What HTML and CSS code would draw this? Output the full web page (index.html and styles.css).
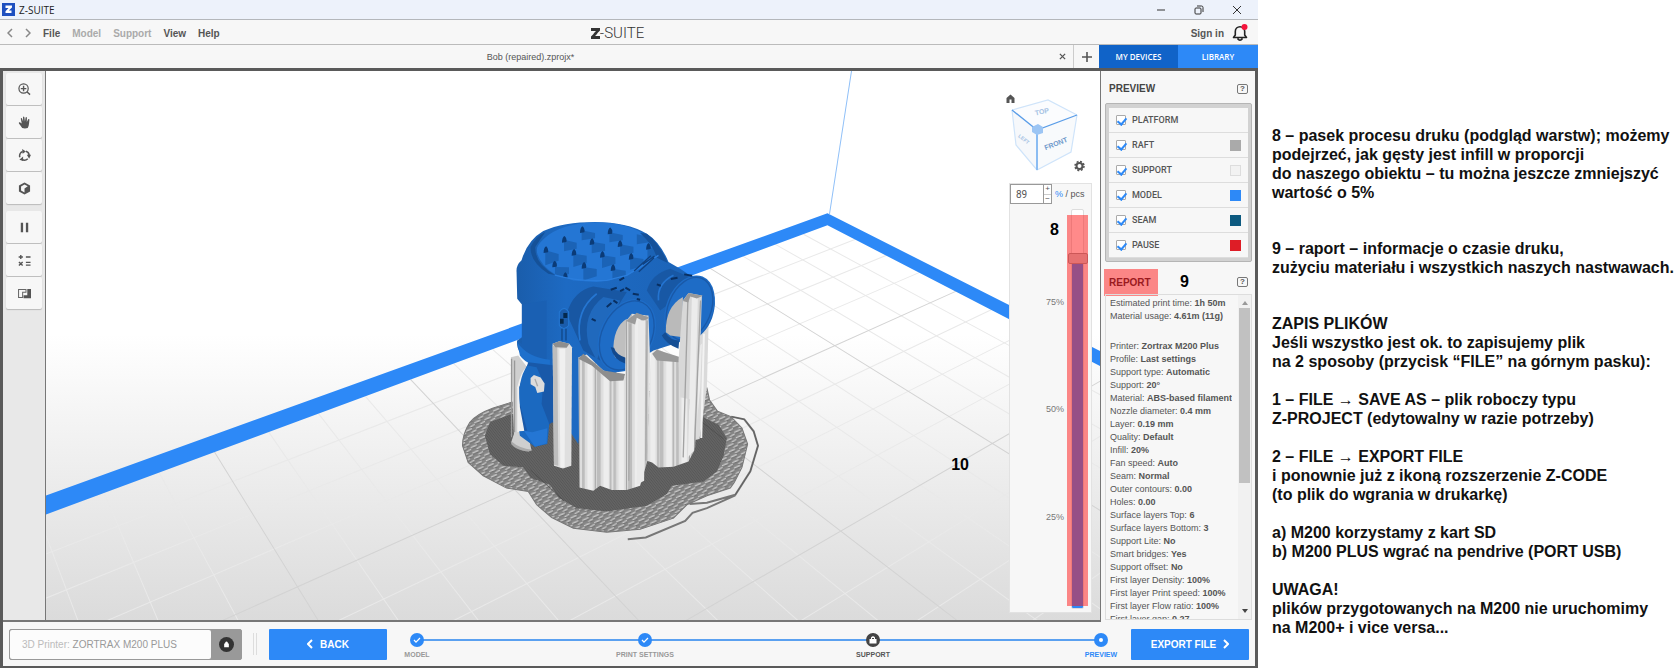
FILE: index.html
```
<!DOCTYPE html>
<html lang="pl">
<head>
<meta charset="utf-8">
<meta name="viewport" content="initial-scale=1.0, width=device-width">
<title>Z-SUITE</title>
<link rel="stylesheet" href="styles.css">
</head>
<body>

<div class="page">
<div class="app">

  <header class="titlebar">
    <svg class="appicon" viewBox="0 0 13 13"><rect width="13" height="13" fill="#1d4fc0"/><path d="M3.500 2.500h6.500v2L6.800 7.500H9.500v2.500H3.500V8.200L6.500 5h-3z" fill="#fff"/></svg>
    <span class="apptitle">Z-SUITE</span>
    <div class="winbtns">
      <button type="button" aria-label="Minimize"><svg viewBox="0 0 10 10"><path d="M1 5h8"/></svg></button>
      <button type="button" aria-label="Restore"><svg viewBox="0 0 10 10"><rect x="1" y="3" width="6" height="6" rx="1"/><path d="M3 1h4.500q1.500 0 1.500 1.500V7"/></svg></button>
      <button type="button" aria-label="Close"><svg viewBox="0 0 10 10"><path d="M1 1l8 8M9 1l-8 8"/></svg></button>
    </div>
  </header>

  <nav class="menubar">
    <div class="menus">
      <button type="button" class="arrow" aria-label="Undo"><svg viewBox="0 0 6 10"><path d="M5 1L1 5l4 4"/></svg></button>
      <button type="button" class="arrow" aria-label="Redo"><svg viewBox="0 0 6 10"><path d="M1 1l4 4-4 4"/></svg></button>
      <button type="button">File</button>
      <button type="button" disabled>Model</button>
      <button type="button" disabled>Support</button>
      <button type="button">View</button>
      <button type="button">Help</button>
    </div>
    <div class="logo">
      <svg viewBox="0 0 9 11"><path d="M0 0h9v2.500L6 5.500H2.500L5 3H0zM9 11H0V8.500L3 5.500h3.500L4 8h5z" fill="#333"/></svg><span>-SUITE</span>
    </div>
    <div class="account">
      <button type="button">Sign in</button>
      <button type="button" aria-label="Notifications"><svg class="bell" viewBox="0 0 16 18"><path d="M1.500 13.500h13L12.700 11V7.500a4.700 4.700 0 0 0-9.400 0V11zM5.500 14.500q2.500 3.500 5 0" fill="none" stroke="#222" stroke-width="1.600" stroke-linejoin="round"/><circle cx="12.500" cy="3" r="3" fill="#f5143c"/></svg></button>
    </div>
  </nav>

  <div class="tabs">
    <div class="filetab"><span>Bob (repaired).zprojx*</span></div>
    <button type="button" class="tabclose" aria-label="Close tab"><svg viewBox="0 0 8 8"><path d="M1 1l6 6M7 1L1 7"/></svg></button>
    <button type="button" class="tabadd" aria-label="New tab"><svg viewBox="0 0 10 10"><path d="M5 0v10M0 5h10"/></svg></button>
    <button type="button" class="sidetab active">MY DEVICES</button>
    <button type="button" class="sidetab">LIBRARY</button>
  </div>

  <main class="work">
    <div class="toolbar">
      <button type="button" aria-label="Zoom"><svg viewBox="0 0 14 14"><circle cx="6" cy="6" r="5" fill="none" stroke="#555" stroke-width="1.300"/><path d="M6 3v6M3 6h6M9.500 9.500l3.500 3" fill="none" stroke="#555" stroke-width="1.500"/></svg></button>
      <button type="button" aria-label="Pan"><svg viewBox="0 0 14 14"><path d="M4.500 13Q3 10.500 1 8q-.5-1.500 1-1.300L4 8 3 3q.3-1.200 1.200-.5L5.500 6 5.400 1.200q.7-1.200 1.400 0L7.500 6l.7-4.500q.8-1 1.400.2L9.500 6.500 11 3.500q1-.8 1.300.3Q12 8 11.500 10.500L10.500 13q-3 1-6 0z" fill="#555"/></svg></button>
      <button type="button" aria-label="Rotate"><svg viewBox="0 0 14 14"><path d="M2 9A5 5 0 0 1 5 2.800M8.500 2.500A5 5 0 0 1 12 6.500M10.500 10.500A5 5 0 0 1 4 11" fill="none" stroke="#555" stroke-width="1.700"/><path d="M4.500 0l4 2.600-3.500 2.600zM9.500 6.200h4.500L12 10.500zM5.500 8.200V13L1.500 11.500z" fill="#555"/></svg></button>
      <button type="button" aria-label="View mode"><svg viewBox="0 0 14 14"><path d="M7 .5l6 3.400v6.300l-6 3.300-6-3.300V3.900z" fill="#555"/><path d="M7 2.700l3.500 2L7 6.900v4.300l-3.700-2V4.800z" fill="#f7f7f7"/></svg></button>
      <i class="sep"></i>
      <button type="button" aria-label="Pause"><svg viewBox="0 0 14 14"><path d="M3 2h2.500v10H3zM8.500 2H11v10H8.500z" fill="#555"/></svg></button>
      <button type="button" aria-label="Calculate"><svg viewBox="0 0 14 14"><path d="M3 1v4.500M.7 3.200h4.600M8.500 3.200h5M1 8.500l4 4M5 8.500l-4 4M8.500 9h5M8.500 12h5" fill="none" stroke="#555" stroke-width="1.500"/></svg></button>
      <button type="button" aria-label="Section"><svg viewBox="0 0 14 10"><path d="M.6 9.400V.6h8v3H5v5.800z" fill="none" stroke="#666" stroke-width="1.100"/><path d="M6 10V7h4V.2h4V10z" fill="#555"/></svg></button>
    </div>

    <div class="viewport">
      <svg class="scene" viewBox="46 71 1054 548" preserveAspectRatio="xMidYMid slice">
        <defs>
          <linearGradient id="floor" x1="0" y1="0" x2="0" y2="1">
            <stop offset="0" stop-color="#fff"/><stop offset=".48" stop-color="#fff"/>
            <stop offset=".75" stop-color="#ececec"/><stop offset="1" stop-color="#dbdbdb"/>
          </linearGradient>
          <linearGradient id="body" x1="0" y1="0" x2="1" y2="0">
            <stop offset="0" stop-color="#1a5dab"/><stop offset=".25" stop-color="#1d6ac3"/><stop offset="1" stop-color="#1c63b6"/>
          </linearGradient>
          <pattern id="mesh" width="32" height="17" patternUnits="userSpaceOnUse" patternTransform="rotate(-17)">
            <rect width="32" height="17" fill="#868686"/>
            <path d="M0 5l20-3M16 13l16-3" stroke="#c9c9c9" stroke-width="4"/>
            <path d="M0 9l22-3M14 17l18-3" stroke="#646464" stroke-width="2"/>
          </pattern>
          <pattern id="raft" width="6" height="6" patternUnits="userSpaceOnUse" patternTransform="rotate(-38)">
            <rect width="6" height="6" fill="#636363"/><path d="M1 0v6" stroke="#575757" stroke-width="2"/>
          </pattern>
          <pattern id="cols" width="94" height="10" patternUnits="userSpaceOnUse">
            <rect width="94" height="10" fill="#dedede"/>
            <path d="M0 0h12v10H0zM50 0h8v10h-8z" fill="#bdbdbd"/>
            <path d="M20 0h17v10H20zM66 0h16v10H66z" fill="#ededed"/>
            <path d="M40 0h3v10h-3zM88 0h3v10h-3z" fill="#9d9d9d"/>
          </pattern>
          <clipPath id="opening"><path d="M290 150Q290 135 312 115 360 70 465 66 570 66 625 112L655 160 600 205 540 235 470 245 400 240 345 222Q295 190 290 150z"/></clipPath>
        </defs>

        <rect x="46" y="71" width="1054" height="548" fill="url(#floor)"/>

        <!-- build plate grid -->
        <path class="minor" d="M803 234L1517 620M775 244L1437 620M743 256L1357 620M677 281L1197 620M642 293L1117 620M606 307L1037 620M530 335L878 620M493 349L798 620M454 363L718 620M366 396L559 620M319 413L479 620M269 431L399 620M160 472L239 620M105 492L159 620M40 516L79 620"/>
        <path class="minor" d="M855 239L-125 620M886 255L-9 620M919 272L107 620M991 309L338 620M1030 329L453 620M1071 350L569 620M1162 397L800 620M1215 424L916 620M1270 452L1031 620"/>
        <path class="major" d="M710 268L1277 620M568 321L957 620M411 379L639 620M215 451L319 620M955 291L222 620M1114 372L685 620"/>
        <path d="M46 495L827 213 1100 351V366L827 225 46 514z" fill="#2d89f7"/>
        <path d="M829 214L851 71" stroke="#8fc0f8" fill="none"/>

        <!-- sliced model -->
        <g transform="translate(440 200) scale(.33333)">
          <path d="M68 735Q68 700 90 665 110 640 160 622L215 605 400 600 780 555 800 562 808 598 832 632 872 648 905 682 922 730 905 800 882 845 870 862 800 885 740 912 700 952 600 985 500 994 400 982 335 950 290 912 265 872 200 862 130 825 85 785z" fill="url(#mesh)" stroke="#777" stroke-width="3"/>
          <path d="M135 705L150 665 215 640 700 640 790 650 835 672 860 712 850 765 830 812 790 842 695 855 680 880 620 915 500 932 410 922 355 890 330 852 272 832 250 800 190 795 150 760z" fill="url(#raft)"/>
          <path d="M272 808L372 900M780 660L850 715" stroke="#484848" stroke-width="2" fill="none"/>
          <path d="M873 648L912 656 940 692 953 735 930 812 885 882 800 906 748 910M563 1015L617 1010 735 960 757 936 800 922 885 884" fill="none" stroke="#777" stroke-width="6"/>
          <path d="M873 648L912 656 940 692 953 735 930 812 885 882" fill="none" stroke="#555" stroke-width="2"/>

          <!-- supports behind the body -->
          <path d="M213 470L235 465 262 500 262 690 275 750 240 745 214 725 222 700z" fill="#cfcfcf"/>
          <path d="M215 475v235M224 480v215" stroke="#999" stroke-width="4"/>
          <path d="M232 560q12-50 28-60l-8 190-20 5z" fill="#f0f0f0"/>
          <path d="M214 722q25 22 62 25l-10 6q-38-4-52-22z" fill="#aaa"/>
          <path d="M770 400L805 370 800 560 778 715 765 718z" fill="#dadada"/>
          <path d="M791 400L783 712" stroke="#f3f3f3" stroke-width="6"/>
          <path d="M632 450L650 445 690 465 735 475 785 430 780 560 762 750 745 782 700 798 655 800 636 785 620 780z" fill="url(#cols)"/>
          <path d="M636 460L650 448 735 475 715 485 650 480z" fill="#999"/>

          <!-- body -->
          <path d="M230 215Q228 195 245 180 262 120 310 92 370 65 465 65 560 65 620 100 660 125 685 185L720 205 760 232Q825 240 824 310 820 370 780 405L640 450 560 500 520 520 430 560 415 730 395 700 330 660 310 500 250 470Q228 445 232 420L246 410V312L232 295z" fill="url(#body)"/>
          <path d="M246 312V430L232 420Q232 450 262 480L320 500V300z" fill="#1a60b3"/>
          <path d="M232 425Q262 470 330 478V500Q265 500 240 465z" fill="#1e70cc"/>
          <path d="M265 485L345 495V660L325 672 300 715 255 700 240 620 238 560z" fill="#1959a9"/>
          <path d="M262 495Q232 540 240 610L262 690 238 692 240 705 285 738 322 730 328 670 305 610 310 545 290 500z" fill="#1b69c0"/>
          <path d="M252 690l25 5 45-12-2 45-35 10z" fill="#2476d4"/>
          <path d="M272 532l10-9 20 8 12 18-2 24-20 4-6-18-14-8z" fill="#dcdcdc"/>
          <path d="M285 535l8 22" stroke="#aaa" stroke-width="4"/>
          <!-- open top with infill -->
          <g clip-path="url(#opening)">
            <path d="M280 60h400v200H280z" fill="#2476d4"/>
            <path d="M316 150v45l40-14v-20zM372 118v35l38-8v-18zM345 200v35l42-14v-20zM400 160v40l40-12v-22zM430 200v40l40-12v-22zM425 90v30l40-6v-16zM455 124v35l40-8v-20zM486 165v38l40-12v-20zM517 205v38l40-12v-20zM508 96v30l40-6v-16zM540 132v35l40-10v-18zM570 170v38l40-12v-20zM590 102v30l38-6v-16zM622 140v35l38-10v-18z" fill="#1b63b6"/>
            <path d="M311 158q0-17 8-20 8 8 5 18zM366 127q0-17 8-20 8 8 5 18zM337 201q0-17 8-20 8 8 5 18zM395 166q0-17 8-20 8 8 5 18zM425 205q0-17 8-20 8 8 5 18zM420 98q0-17 8-20 8 8 5 18zM449 134q0-17 8-20 8 8 5 18zM480 172q0-17 8-20 8 8 5 18zM512 212q0-17 8-20 8 8 5 18zM503 102q0-17 8-20 8 8 5 18zM533 140q0-17 8-20 8 8 5 18zM566 178q0-17 8-20 8 8 5 18zM369 236q0-17 8-20 8 8 5 18zM618 148q0-17 8-20 8 8 5 18z" fill="#0b3b77"/>
          </g>
          <path d="M286 140Q284 190 345 224L325 220Q270 185 272 140 285 110 316 95z" fill="#155198"/>
          <path d="M620 100Q655 125 683 188L650 172Q640 135 600 98z" fill="#15519a"/>
          <path d="M345 224Q420 245 500 240L560 225 655 165" fill="none" stroke="#2a7ddc" stroke-width="4"/>
          <path d="M582 212l50-46M596 214l46-42M608 192l35-25" stroke="#0f4180" stroke-width="4" fill="none"/>
          <!-- goggles -->
          <path d="M380 340Q400 270 460 258L560 275 520 340 480 480 430 450z" fill="#1857a3"/>
          <path d="M420 420Q405 330 470 280" fill="none" stroke="#2576d2" stroke-width="5"/>
          <path d="M445 430Q425 340 490 290L540 300 500 400 470 480z" fill="#2069bd"/>
          <path d="M620 270Q635 220 690 205L760 235 700 300 660 330z" fill="#1858a5"/>
          <path d="M655 300Q650 250 700 225" fill="none" stroke="#2474d0" stroke-width="5"/>
          <ellipse cx="748" cy="325" rx="70" ry="104" transform="rotate(22 748 325)" fill="#1e6cc6"/>
          <ellipse cx="560" cy="405" rx="80" ry="115" transform="rotate(26 560 405)" fill="#1e6cc6"/>
          <ellipse cx="748" cy="325" rx="64" ry="98" transform="rotate(22 748 325)" fill="none" stroke="#1959a8" stroke-width="4"/>
          <ellipse cx="560" cy="405" rx="74" ry="109" transform="rotate(26 560 405)" fill="none" stroke="#1959a8" stroke-width="4"/>
          <path d="M520 455Q518 380 560 355L562 490 525 470z" fill="#bfbfbf"/>
          <path d="M512 440q8 38 45 50v-18q-30-10-35-30z" fill="#13498d"/>
          <path d="M677 395Q675 320 728 290V410L690 405z" fill="#bababa"/>
          <path d="M675 395q15 25 42 25l-2 25q-38-15-50-40z" fill="#154e94"/>
          <path d="M500 320l14-12M520 300l12 8M512 268l18-6M540 272l12-6M556 262l14 8M578 280l18 3M590 296l10 2M650 252l12 4M692 236l20-4M732 222l24 4M538 240l14-8M455 355l12 6" stroke="#092f61" stroke-width="6" fill="none"/>
          <!-- ear screw -->
          <path d="M358 335q15-22 28 0v40q-15 18-28 0z" fill="#1a5cab" stroke="#2478d4" stroke-width="3"/>
          <path d="M370 338h12v15h-12zM360 355h11v15h-11z" fill="#04294d"/>
          <path d="M366 385v35M378 385v35" stroke="#124888" stroke-width="4"/>
          <!-- supports in front -->
          <path d="M338 430l20-8 30 8 8 10-2 355-25 8-27-8z" fill="#dfdfdf"/>
          <path d="M338 435l14 5 3 355-13-3z" fill="#bdbdbd"/>
          <path d="M358 445h18l-2 355h-13z" fill="#f0f0f0"/>
          <path d="M338 430l20-8 30 8-8 12-34-2z" fill="#8e8e8e"/>
          <path d="M415 470L440 462 490 510 555 530 558 362 575 340 625 345 630 480 622 780 600 855 560 868 515 868 480 855 460 870 418 860z" fill="url(#cols)"/>
          <path d="M415 475L430 460 490 510 555 520 550 540 510 542 455 495z" fill="#8d8d8d"/>
          <path d="M558 362L590 337 628 352 610 362 590 352 585 372z" fill="#9a9a9a"/>
          <path d="M594 360h22l-4 480-22 12z" fill="#e9e9e9"/>
          <path d="M570 370l-4 470M621 360l-4 420" stroke="#aaa" stroke-width="4"/>
          <path d="M728 300L745 278 785 285 780 440 765 600 720 590 715 480z" fill="#d8d8d8"/>
          <path d="M755 290h18l-12 460-18 20z" fill="#ececec"/>
          <path d="M743 300l-14 470M781 300l-18 440" stroke="#a2a2a2" stroke-width="4"/>
          <path d="M728 302L745 278 788 286 770 294 750 288 744 306z" fill="#999"/>
        </g>
      </svg>

      <svg class="navcube" viewBox="1004 94 88 78">
        <path d="M1012 110L1048 100 1077 115 1037 130z" fill="#fbfcfe"/>
        <path d="M1012 110L1037 130 1037 170 1016 145z" fill="#f6f8fb"/>
        <path d="M1037 130L1077 115 1071 152 1037 170z" fill="#f8fafc"/>
        <path d="M1012 110L1048 100 1077 115M1012 110L1016 145 1037 170 1071 152 1077 115" fill="none" stroke="#cfe4fa" stroke-width="1.200"/>
        <path d="M1012 110L1037 130 1077 115" fill="none" stroke="#5a9de8" stroke-width="1.300"/>
        <path d="M1037 130V170" fill="none" stroke="#8bbcf2" stroke-width="2"/>
        <path d="M1032 127l6-3 5 3v6l-6 2-5-3z" fill="#9cc5f4"/>
        <text x="1042" y="114" transform="rotate(-12 1042 112)" class="facetext dim">TOP</text>
        <text x="1056" y="146" transform="rotate(-21 1056 144)" class="facetext">FRONT</text>
        <text x="1024" y="141" transform="rotate(38 1024 139)" class="facetext dim small">LEFT</text>
        <path d="M1006.500 103v-5l4-3.500 4 3.500v5h-3v-3.500h-2v3.500z" fill="#555"/>
        <circle cx="1079.500" cy="166" r="3" fill="none" stroke="#555" stroke-width="2"/>
        <circle cx="1079.500" cy="166" r="4.500" fill="none" stroke="#555" stroke-width="1.500" stroke-dasharray="2 1.530"/>
      </svg>

      <div class="layers">
        <div class="layerinput">
          <input type="number" id="layer" value="89" aria-label="Layer">
          <div class="spin"><button type="button">+</button><button type="button">−</button></div>
          <label for="layer"><b>%</b> / pcs</label>
        </div>
        <div class="layerbody">
          <div class="scale"><span>75%</span><span>50%</span><span>25%</span></div>
          <input type="range" class="layerslider" min="0" max="100" value="89" aria-label="Visible layers">
          <i class="mark"></i>
        </div>
        <strong class="num eight">8</strong>
      </div>
      <strong class="num ten">10</strong>
    </div>

    <aside class="side">
      <div class="sidehead">
        <h2>PREVIEW</h2>
        <button type="button" class="help">?</button>
      </div>
      <div class="filters">
        <label><input type="checkbox" checked>PLATFORM</label>
        <label><input type="checkbox" checked>RAFT<i class="swatch raft"></i></label>
        <label><input type="checkbox" checked>SUPPORT<i class="swatch support"></i></label>
        <label><input type="checkbox" checked>MODEL<i class="swatch model"></i></label>
        <label><input type="checkbox" checked>SEAM<i class="swatch seam"></i></label>
        <label><input type="checkbox" checked>PAUSE<i class="swatch pause"></i></label>
      </div>
      <div class="sidehead reporthead">
        <h2 class="marked">REPORT</h2>
        <strong class="num nine">9</strong>
        <button type="button" class="help">?</button>
      </div>
      <div class="report">
        <div class="reporttext">
          <p>Estimated print time: <b>1h 50m</b></p>
          <p>Material usage: <b>4.61m (11g)</b></p>
          <p class="first">Printer: <b>Zortrax M200 Plus</b></p>
          <p>Profile: <b>Last settings</b></p>
          <p>Support type: <b>Automatic</b></p>
          <p>Support: <b>20°</b></p>
          <p>Material: <b>ABS-based filament</b></p>
          <p>Nozzle diameter: <b>0.4 mm</b></p>
          <p>Layer: <b>0.19 mm</b></p>
          <p>Quality: <b>Default</b></p>
          <p>Infill: <b>20%</b></p>
          <p>Fan speed: <b>Auto</b></p>
          <p>Seam: <b>Normal</b></p>
          <p>Outer contours: <b>0.00</b></p>
          <p>Holes: <b>0.00</b></p>
          <p>Surface layers Top: <b>6</b></p>
          <p>Surface layers Bottom: <b>3</b></p>
          <p>Support Lite: <b>No</b></p>
          <p>Smart bridges: <b>Yes</b></p>
          <p>Support offset: <b>No</b></p>
          <p>First layer Density: <b>100%</b></p>
          <p>First layer Print speed: <b>100%</b></p>
          <p>First layer Flow ratio: <b>100%</b></p>
          <p>First layer gap: <b>0.27</b></p>
        </div>
        <div class="scrollbar">
          <svg viewBox="0 0 6 4"><path d="M0 4l3-4 3 4z" fill="#999"/></svg>
          <i></i>
          <svg viewBox="0 0 6 4"><path d="M0 0l3 4 3-4z" fill="#444"/></svg>
        </div>
      </div>
    </aside>
  </main>

  <footer class="bottom">
    <div class="printer">
      <div class="printername">3D Printer: <span>ZORTRAX M200 PLUS</span></div>
      <button type="button" aria-label="Printer locked"><svg viewBox="0 0 16 16"><circle cx="8" cy="8" r="8" fill="#333"/><path d="M5.500 7h5v4h-5zM6.500 7V6q1.500-2.500 3 0v1" fill="#fff"/></svg></button>
    </div>
    <i class="divider"></i>
    <button type="button" class="action"><svg viewBox="0 0 6 10"><path d="M5 1L1 5l4 4"/></svg>BACK</button>
    <ol class="steps">
      <li><svg viewBox="0 0 14 14"><circle cx="7" cy="7" r="7" fill="#2d89f7"/><path d="M4 7l2 2.200L10 5" fill="none" stroke="#fff" stroke-width="1.200"/></svg>MODEL</li>
      <li><svg viewBox="0 0 14 14"><circle cx="7" cy="7" r="7" fill="#2d89f7"/><path d="M4 7l2 2.200L10 5" fill="none" stroke="#fff" stroke-width="1.200"/></svg>PRINT SETTINGS</li>
      <li class="locked"><svg viewBox="0 0 14 14"><circle cx="7" cy="7" r="6.200" fill="#444" stroke="#444" stroke-width="1.600"/><path d="M3.500 6h7v4.500h-7zM5 6V4.500q2-2.500 4 0V6" fill="#fff"/><path d="M6 5.500h2" stroke="#444"/></svg>SUPPORT</li>
      <li class="current"><svg viewBox="0 0 14 14"><circle cx="7" cy="7" r="7" fill="#2d89f7"/><circle cx="7" cy="7" r="2" fill="#fff"/></svg>PREVIEW</li>
    </ol>
    <button type="button" class="action">EXPORT FILE<svg viewBox="0 0 6 10"><path d="M1 1l4 4-4 4"/></svg></button>
  </footer>
</div>

<section class="notes">
  <p>8 – pasek procesu druku (podgląd warstw); możemy<br>podejrzeć, jak gęsty jest infill w proporcji<br>do naszego obiektu – tu można jeszcze zmniejszyć<br>wartość o 5%</p>
  <p class="far">9 – raport – informacje o czasie druku,<br>zużyciu materiału i wszystkich naszych nastwawach.</p>
  <p class="far">ZAPIS PLIKÓW<br>Jeśli wszystko jest ok. to zapisujemy plik<br>na 2 sposoby (przycisk “FILE” na górnym pasku):</p>
  <p>1 – FILE → SAVE AS – plik roboczy typu<br>Z-PROJECT (edytowalny w razie potrzeby)</p>
  <p>2 – FILE → EXPORT FILE<br>i ponownie już z ikoną rozszerzenie Z-CODE<br>(to plik do wgrania w drukarkę)</p>
  <p>a) M200 korzystamy z kart SD<br>b) M200 PLUS wgrać na pendrive (PORT USB)</p>
  <p>UWAGA!<br>plików przygotowanych na M200 nie uruchomimy<br>na M200+ i vice versa...</p>
</section>
</div>

</body>
</html>
```
FILE: styles.css
```
html,body,div,h2,p,ol,li,button,input{margin:0;padding:0;}
*{box-sizing:border-box;}
body{
  color:#555;
  background:#fff;
  font-family:"Liberation Sans",Arial,Helvetica,sans-serif;
  font-size:9px;
}
button{border:0;background:none;font:inherit;color:inherit;}
svg{display:block;}
.page{display:flex;height:100vh;}
.app{
  flex:1;
  min-width:0;
  display:flex;
  flex-direction:column;
  background:#f7f7f7;
}

/* window title */
.titlebar{
  display:flex;
  align-items:center;
  height:20px;
  padding:0 16px 0 2px;
  background:#edf2fb;
  border-bottom:1px solid #b4b7bb;
}
.appicon{width:13px;height:13px;}
.apptitle{margin-left:4px;font:10px "Open Sans","Noto Sans",sans-serif;color:#222;}
.winbtns{margin-left:auto;display:flex;gap:28px;}
.winbtns svg{width:10px;height:10px;fill:none;stroke:#333;}

/* menu */
.menubar{
  display:flex;
  align-items:center;
  height:25px;
  padding:2px 10px 0 7px;
  border-bottom:1px solid #bbb;
  font-size:10px;
  font-weight:bold;
}
.menus{flex:1 0 0;display:flex;align-items:center;gap:12px;}
.menus button:disabled{color:#aaa;}
.arrow svg{width:6px;height:10px;fill:none;stroke:#888;stroke-width:1.5;}
.logo{display:flex;align-items:center;color:#333;}
.logo svg{width:9px;height:11px;}
.logo span{font:300 15px/18px Roboto,sans-serif;}
.account{flex:1 0 20px;display:flex;justify-content:flex-end;align-items:center;gap:8px;}
.bell{width:16px;height:18px;}

/* tabs */
.tabs{
  display:flex;
  height:26px;
  border-bottom:3px solid #5a5a5a;
}
.filetab{flex:1;display:flex;align-items:center;justify-content:center;padding-left:10px;}
.tabclose{width:22px;display:grid;place-items:center;}
.tabclose svg{width:7px;height:7px;stroke:#555;stroke-width:1.5;}
.tabadd{width:26px;display:grid;place-items:center;border-left:1px solid #ccc;}
.tabadd svg{width:10px;height:10px;stroke:#555;stroke-width:1.6;}
.sidetab{
  width:80px;
  background:#2d89f7;
  color:#fff;
  font:600 8px "Open Sans",sans-serif;
}
.sidetab.active{width:79px;background:#1063c8;}

/* work area */
.work{
  flex:1;
  min-height:0;
  display:grid;
  grid-template-columns:43px 1fr 154px;
  grid-template-rows:100%;
  border-right:3px solid #5a5a5a;
  border-left:3px solid #5a5a5a;
}
.toolbar{
  display:flex;
  flex-direction:column;
  gap:1px;
  padding:2px 3px;
  background:#e8e8e8;
  border-right:1px solid #777;
  border-bottom:2px solid #777;
}
.toolbar button{
  height:32px;
  display:grid;
  place-items:center;
  background:#f7f7f7;
  border-radius:2px;
  box-shadow:0 1px 1px #bbb;
}
.toolbar svg{width:13px;height:13px;}
.sep{height:5px;}
.viewport{
  position:relative;
  overflow:hidden;
  border-right:1px solid #777;
  border-bottom:2px solid #777;
}
.scene{position:absolute;inset:0;width:100%;height:100%;}
.minor{stroke:#e9e9e9;fill:none;}
.major{stroke:#d3d3d3;fill:none;}
.navcube{position:absolute;top:23px;right:8px;width:88px;height:78px;}
.facetext{font:bold 7px "Liberation Sans",sans-serif;fill:#6e98cb;text-anchor:middle;}
.dim{fill:#a5c2e4;}
.facetext.small{font-size:5px;}
.num{font-size:16px;line-height:18px;color:#000;}
.ten{position:absolute;top:385px;right:131px;}

/* layer slider */
.layers{
  position:absolute;
  top:112px;
  right:8px;
  bottom:7px;
  width:83px;
  display:flex;
  flex-direction:column;
  background:#f7f7f7;
  border:1px solid #e2e2e2;
}
.layerinput{flex:none;display:flex;align-items:center;height:20px;}
.layerinput input{
  width:34px;
  height:20px;
  padding-left:5px;
  border:1px solid #999;
  background:#fff;
  font:10px Roboto,sans-serif;
  color:#555;
  appearance:textfield;
}
.layerinput input::-webkit-inner-spin-button{appearance:none;}
.spin{width:8px;height:20px;display:grid;border:1px solid #999;border-left:0;background:#fff;}
.spin button{font-size:8px;line-height:8px;}
.spin button+button{border-top:1px solid #ccc;}
.layerinput label{margin-left:3px;white-space:nowrap;}
.layerinput b{font-weight:normal;color:#2d89f7;}
.layerbody{
  flex:1 1 0;
  min-height:0;
  position:relative;
  display:grid;
  grid-template-columns:1fr 20px;
  grid-template-rows:100%;
  margin:5px 4px 3px 0;
}
.scale{
  display:flex;
  flex-direction:column;
  align-items:flex-end;
  justify-content:space-evenly;
  margin:-10px 3px -10px 0;
  color:#777;
}
.layerslider{
  appearance:none;
  writing-mode:vertical-lr;
  direction:rtl;
  width:20px;
  height:100%;
  min-height:0;
  background:none;
}
.layerslider::-webkit-slider-runnable-track{
  width:13px;
  height:100%;
  border:1px solid #ddd;
  border-radius:2px;
  background:linear-gradient(#fff 12%,#2d89f7 12%);
}
.layerslider::-webkit-slider-thumb{
  appearance:none;
  width:20px;
  height:11px;
  margin-left:-4px;
  border:1px solid #999;
  border-radius:2px;
  background:#ccc;
}
.mark{
  position:absolute;
  top:6px;
  right:-1px;
  bottom:3px;
  width:21px;
  background:rgba(255,22,22,.5);
}
.eight{position:absolute;top:37px;left:40px;}

/* side panel */
.side{
  min-height:0;
  display:flex;
  flex-direction:column;
  padding:0 3px 2px 4px;
}
.sidehead{
  flex:none;
  display:flex;
  align-items:center;
  justify-content:space-between;
  height:32px;
  padding:3px 4px 0 4px;
}
h2{font-size:10px;color:#444;}
.help{
  width:11px;
  height:10px;
  border:1px solid #777;
  border-radius:2px;
  font-size:8px;
  font-weight:bold;
  line-height:8px;
}
.filters{
  padding:4px 3px 3px;
  border:1px solid #b5b5b5;
  border-radius:2px;
  background:#d2d2d2;
}
.filters label{
  display:flex;
  align-items:center;
  gap:6px;
  height:25px;
  padding:0 7px;
  border-bottom:1px solid #ddd;
  background:#f7f7f7;
  font:500 9px Roboto,sans-serif;
}
.filters input{
  appearance:none;
  width:10px;
  height:10px;
  border:1px solid #aaa;
  border-radius:1px;
  background:#fff;
}
.filters input:checked::before{
  content:"";
  display:block;
  width:4px;
  height:7px;
  margin:0 0 0 2px;
  border:solid #2d89f7;
  border-width:0 2px 2px 0;
  transform:rotate(40deg);
}
.swatch{width:11px;height:11px;margin-left:auto;}
.raft{background:#aaa;}
.support{background:#f2f2f2;border:1px solid #ddd;}
.model{background:#2d89f7;}
.seam{background:#0d5a80;}
.pause{background:#de1d26;}
.reporthead{height:32px;padding:8px 4px 0 0;}
.marked{
  width:54px;
  height:27px;
  margin-left:-1px;
  padding-left:5px;
  line-height:27px;
  background:rgba(255,22,22,.5);
  color:#9a1a20;
}
.nine{margin:0 auto 0 22px;}
.report{
  flex:1;
  min-height:0;
  display:flex;
  justify-content:space-between;
  border:1px solid #ddd;
}
.reporttext{
  overflow:hidden;
  padding:2px 0 0 4px;
  line-height:13px;
  white-space:nowrap;
}
.first{margin-top:17px;}
.scrollbar{
  width:13px;
  display:flex;
  flex-direction:column;
  align-items:center;
  padding:6px 1px;
  background:#f1f1f1;
}
.scrollbar svg{width:6px;height:4px;}
.scrollbar i{width:11px;height:56%;margin:3px 0 auto;background:#c1c1c1;}

/* footer */
.bottom{
  flex:none;
  display:flex;
  align-items:center;
  height:46px;
  padding:0 6px;
  border:solid #5a5a5a;
  border-width:0 3px 2px;
  font-size:10px;
}
.printer{display:flex;width:233px;height:31px;border:1px solid #999;border-radius:2px;background:#999;}
.printername{
  flex:1;
  padding:0 12px;
  line-height:29px;
  border-radius:2px;
  background:#fcfcfc;
  color:#bbb;
}
.printername span{color:#999;}
.printer button{width:30px;display:grid;place-items:center;}
.printer svg{width:15px;height:15px;}
.divider{width:4px;height:22px;margin:0 12px 0 11px;border:solid #ddd;border-width:0 1px;}
.action{
  flex:none;
  width:118px;
  height:31px;
  display:flex;
  align-items:center;
  justify-content:center;
  gap:7px;
  border-radius:1px;
  background:#2d89f7;
  color:#fff;
  font-weight:bold;
}
.action svg{width:6px;height:10px;fill:none;stroke:#fff;stroke-width:2;}
.steps{
  flex:1;
  position:relative;
  display:flex;
  justify-content:space-between;
  padding-top:4px;
  list-style:none;
}
.steps::before{
  content:"";
  position:absolute;
  top:10px;
  left:30px;
  right:30px;
  height:2px;
  background:#5aa0f0;
}
.steps li{
  position:relative;
  width:60px;
  text-align:center;
  white-space:nowrap;
  font-size:7px;
  line-height:8px;
  font-weight:bold;
  color:#999;
}
.steps svg{width:14px;height:14px;margin:0 auto 4px;}
.steps .locked{color:#555;}
.steps .current{color:#2d89f7;}

/* instructions beside the window */
.notes{
  flex:none;
  width:422px;
  padding:126px 0 0 14px;
  font-size:16px;
  line-height:19px;
  font-weight:bold;
  color:#111;
  white-space:nowrap;
}
.notes p+p{margin-top:19px;}
.notes .far.far{margin-top:37px;}
```
